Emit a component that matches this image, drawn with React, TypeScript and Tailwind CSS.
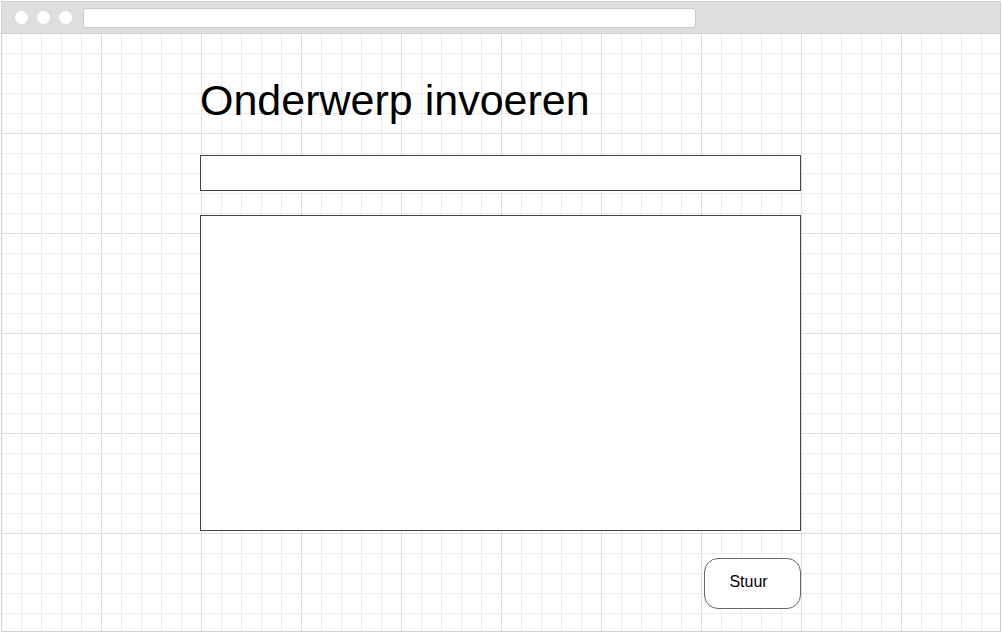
import React from 'react';

const gridBg =
  'bg-[linear-gradient(to_right,#dedede_1px,transparent_1px),linear-gradient(to_bottom,#dedede_1px,transparent_1px),linear-gradient(to_right,#ededed_1px,transparent_1px),linear-gradient(to_bottom,#ededed_1px,transparent_1px)] bg-[size:100px_100px,100px_100px,20px_20px,20px_20px] bg-[position:-1px_-1px]';

export default function App() {
  return (
    <div className="w-[1002px] h-[633px] bg-white p-px font-['Liberation_Sans',Arial,sans-serif]">
      <div className="w-full h-full border border-[#cfcfcf] flex flex-col overflow-hidden">
        {/* Browser chrome */}
        <div className="h-[32px] shrink-0 bg-[#dedede] border-b border-[#cfcfcf] flex items-center pl-[13px]">
          <div className="flex gap-[9px]">
            <span className="w-[13px] h-[13px] rounded-full bg-white" />
            <span className="w-[13px] h-[13px] rounded-full bg-white" />
            <span className="w-[13px] h-[13px] rounded-full bg-white" />
          </div>
          <div className="ml-[11px] w-[613px] h-[20px] bg-white border border-[#c8c8c8] rounded-[3px]" />
        </div>

        {/* Page */}
        <div className={`flex-1 ${gridBg}`}>
          <div className="ml-[198px] w-[601px] flex flex-col pt-[45px]">
            <h1 className="text-[43px] leading-none text-black">Onderwerp invoeren</h1>
            <input
              type="text"
              className="mt-[33px] h-[36px] w-full bg-white border border-[#444] outline-none"
            />
            <textarea className="mt-[24px] h-[316px] w-full bg-white border border-[#444] resize-none outline-none" />
            <div className="flex justify-end mt-[27px]">
              <button className="w-[97px] h-[51px] pr-[8px] pb-[4px] bg-white border border-[#666] rounded-[14px] text-[16px] text-black">
                Stuur
              </button>
            </div>
          </div>
        </div>
      </div>
    </div>
  );
}
